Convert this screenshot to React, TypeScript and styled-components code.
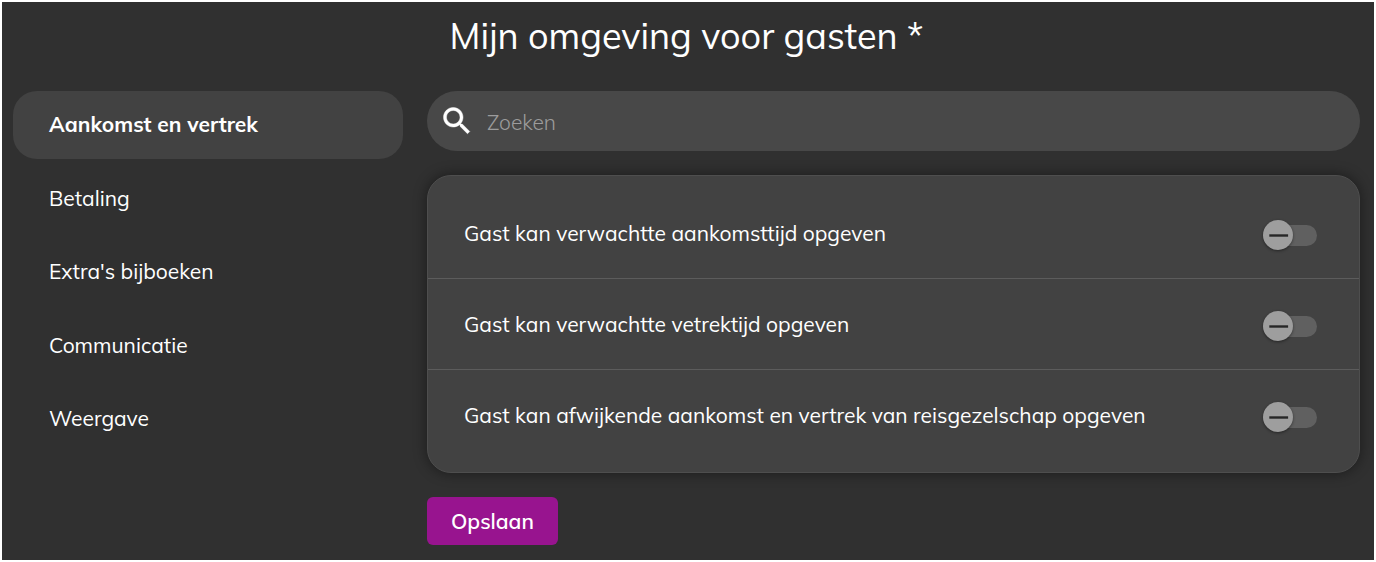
import React, { useState } from "react";
import styled, { createGlobalStyle } from "styled-components";

const GlobalStyle = createGlobalStyle`
  * { box-sizing: border-box; }
  body {
    margin: 0;
    background: #fff;
    color: #fff;
    font-family: Muli, Mulish, Lato, "Noto Sans", sans-serif;
    font-size: 21px;
    line-height: 28px;
  }
  button, input { font: inherit; color: inherit; }
`;

const Page = styled.div`
  min-height: 100vh;
  border: 2px solid #fff;
  background: #303030;
  padding: 10px 14px 15px 11px;
`;

const Title = styled.h1`
  margin: 0 0 31px;
  font-size: 36px;
  line-height: 48px;
  font-weight: 400;
  text-align: center;
`;

const Layout = styled.div`
  display: grid;
  grid-template-columns: 390px minmax(0, 1fr);
  gap: 24px;
  align-items: start;
`;

const Nav = styled.nav`
  display: flex;
  flex-direction: column;
  justify-content: space-between;
  min-height: 362px;
`;

const NavLink = styled.a<{ $active: boolean }>`
  display: block;
  padding: 19px 36px 21px;
  border-radius: 24px;
  background: ${(p) => (p.$active ? "#424242" : "transparent")};
  color: #fff;
  font-weight: ${(p) => (p.$active ? 700 : 400)};
  text-decoration: none;
`;

const SearchBar = styled.label`
  display: flex;
  align-items: center;
  gap: 12px;
  height: 60px;
  padding: 0 24px 0 12px;
  border-radius: 30px;
  background: #484848;
`;

const SearchInput = styled.input`
  flex: 1;
  min-width: 0;
  padding: 2px 0 0;
  border: 0;
  outline: 0;
  background: transparent;
  font-weight: 300;
  &::placeholder { color: #9c9c9c; opacity: 1; }
`;

const Card = styled.div`
  margin: 24px 0;
  padding: 12px 0;
  border: 1px solid #4e4e4e;
  border-radius: 24px;
  background: #424242;
  box-shadow: 0 0 14px rgba(0, 0, 0, 0.45);
`;

const SettingRow = styled.label`
  display: flex;
  align-items: center;
  justify-content: space-between;
  gap: 24px;
  min-height: 90px;
  padding: 0 42px 0 36px;
  & + & {
    min-height: 91px;
    border-top: 1px solid #5c5c5c;
  }
`;

const Switch = styled.span`
  display: grid;
  flex: none;
  align-items: center;
  width: 54px;
  height: 30px;
  margin-top: 4px;
  > * { grid-area: 1 / 1; }
`;

const SwitchInput = styled.input`
  appearance: none;
  width: 54px;
  height: 21px;
  margin: 0;
  border-radius: 11px;
  background: #606060;
  cursor: pointer;
  &:checked { background: #6b2a67; }
`;

const Thumb = styled.span<{ $on: boolean }>`
  display: grid;
  place-items: center;
  justify-self: ${(p) => (p.$on ? "end" : "start")};
  z-index: 1;
  width: 30px;
  height: 30px;
  border-radius: 50%;
  background: ${(p) => (p.$on ? "#98148f" : "#9e9e9e")};
  box-shadow: 0 1px 3px rgba(0, 0, 0, 0.45);
  pointer-events: none;
`;

const SaveButton = styled.button`
  height: 48px;
  padding: 0 24px;
  border: 0;
  border-radius: 6px;
  background: #98148f;
  font-weight: 600;
  cursor: pointer;
`;

const sections = ["Aankomst en vertrek", "Betaling", "Extra's bijboeken", "Communicatie", "Weergave"];

const settings = [
  "Gast kan verwachtte aankomsttijd opgeven",
  "Gast kan verwachtte vetrektijd opgeven",
  "Gast kan afwijkende aankomst en vertrek van reisgezelschap opgeven",
];

function Setting({ text }: { text: string }) {
  const [on, setOn] = useState(false);
  return (
    <SettingRow>
      <span>{text}</span>
      <Switch>
        <SwitchInput type="checkbox" role="switch" checked={on} onChange={(e) => setOn(e.target.checked)} />
        <Thumb $on={on}>
          <svg width="30" height="30" viewBox="0 0 30 30" aria-hidden="true">
            <path d={on ? "M7 15l5 5 11-11" : "M6.3 15.5h18.8"} fill="none" stroke="#262626" strokeWidth="2.4" />
          </svg>
        </Thumb>
      </Switch>
    </SettingRow>
  );
}

export default function App() {
  const [active, setActive] = useState(0);
  return (
    <>
      <GlobalStyle />
      <Page>
        <Title>Mijn omgeving voor gasten *</Title>
        <Layout>
          <Nav>
            {sections.map((name, i) => (
              <NavLink key={name} href="#" $active={i === active} onClick={() => setActive(i)}>
                {name}
              </NavLink>
            ))}
          </Nav>
          <main>
            <SearchBar>
              <svg width="36" height="36" viewBox="0 0 24 24" fill="#fff" stroke="#fff" strokeWidth="0.3" aria-hidden="true">
                <path d="M15.5 14h-.79l-.28-.27C15.41 12.59 16 11.11 16 9.5 16 5.91 13.09 3 9.5 3S3 5.91 3 9.5 5.91 16 9.5 16c1.61 0 3.09-.59 4.23-1.57l.27.28v.79l5 4.99L20.49 19l-4.99-5zm-6 0C7.01 14 5 11.99 5 9.5S7.01 5 9.5 5 14 7.01 14 9.5 11.99 14 9.5 14z" />
              </svg>
              <SearchInput type="search" placeholder="Zoeken" aria-label="Zoeken" />
            </SearchBar>
            <Card>
              {settings.map((text) => (
                <Setting key={text} text={text} />
              ))}
            </Card>
            <SaveButton type="button">Opslaan</SaveButton>
          </main>
        </Layout>
      </Page>
    </>
  );
}
